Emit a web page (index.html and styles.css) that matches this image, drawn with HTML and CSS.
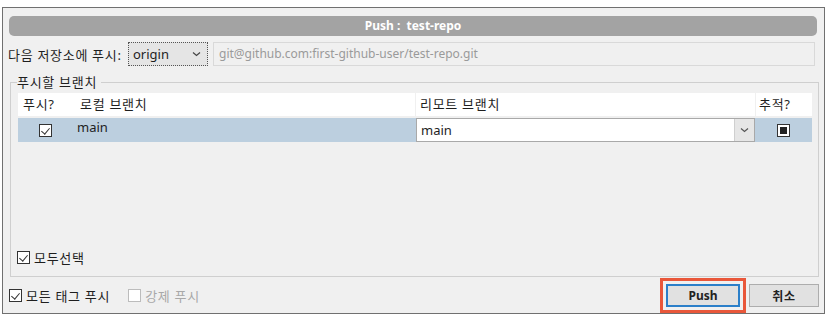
FILE: index.html
```html
<!DOCTYPE html>
<html lang="ko">
<head>
    <meta charset="UTF-8">
    <meta name="viewport" content="width=device-width, initial-scale=1.0">
    <title>Push : test-repo</title>
    <link rel="stylesheet" href="styles.css">
</head>
<body>
    <div class="window">
        <div class="titlebar">Push :&nbsp; test-repo</div>

        <div class="remote-row">
            <span class="remote-label ko">다음 저장소에 푸시:</span>
            <div class="remote-select">
                <span>origin</span>
                <svg class="chevron" width="9" height="6" viewBox="0 0 9 6"><path d="M1 1.5 L4.5 4.5 L8 1.5" fill="none" stroke="#444" stroke-width="1.2"/></svg>
            </div>
            <div class="remote-url">git@github.com:first-github-user/test-repo.git</div>
        </div>

        <fieldset class="branches">
            <legend class="ko">푸시할 브랜치</legend>
            <div class="branch-table">
                <div class="branch-head ko">
                    <div class="col-push">푸시?</div>
                    <div class="col-local">로컬 브랜치</div>
                    <div class="col-remote">리모트 브랜치</div>
                    <div class="col-track">추적?</div>
                </div>
                <div class="branch-row">
                    <div class="col-push"><span class="check checked"></span></div>
                    <div class="col-local">main</div>
                    <div class="col-remote">
                        <div class="remote-branch">
                            <span class="remote-branch-name">main</span>
                            <span class="remote-branch-btn">
                                <svg width="9" height="6" viewBox="0 0 9 6"><path d="M1 1.5 L4.5 4.5 L8 1.5" fill="none" stroke="#555" stroke-width="1.2"/></svg>
                            </span>
                        </div>
                    </div>
                    <div class="col-track"><span class="check filled"></span></div>
                </div>
            </div>
            <label class="option select-all ko"><span class="check checked"></span>모두선택</label>
        </fieldset>

        <div class="bottom-row">
            <label class="option ko"><span class="check checked"></span>모든 태그 푸시</label>
            <label class="option disabled ko"><span class="check"></span>강제 푸시</label>
            <div class="buttons">
                <span class="highlight"><button class="btn btn-default">Push</button></span>
                <button class="btn btn-cancel ko">취소</button>
            </div>
        </div>
    </div>
</body>
</html>
```

FILE: styles.css
```css
body {
    margin: 0;
    background: #fff;
    font-family: "Noto Sans", "Noto Sans CJK KR", sans-serif;
    font-size: 13px;
    color: #1e1e1e;
}

/* Hangul labels run a bit wider in the original */
.ko {
    letter-spacing: 0.7px;
}

/* Dialog frame */
.window {
    margin: 7px 0 0 2px;
    width: 823px;
    height: 307px;
    box-sizing: border-box;
    border: 1px solid #707070;
    background: #f0f0f0;
    padding: 8px 7px 0 6px;
}

.titlebar {
    height: 20px;
    line-height: 20px;
    border-radius: 5px;
    background: #a3a3a3;
    color: #fff;
    font-weight: bold;
    font-size: 12px;
    text-align: center;
}

/* Remote row */
.remote-row {
    display: flex;
    align-items: center;
    height: 24px;
    margin-top: 6px;
}

.remote-label {
    margin-left: -1px;
    width: 120px;
}

.remote-select {
    display: flex;
    align-items: center;
    justify-content: space-between;
    width: 80px;
    height: 24px;
    box-sizing: border-box;
    border: 1px dotted #555;
    background: #e5e5e5;
    padding: 0 6px 0 4px;
}

.remote-url {
    flex: 1;
    height: 24px;
    line-height: 22px;
    box-sizing: border-box;
    margin-left: 5px;
    margin-right: 2px;
    border: 1px solid #d9d9d9;
    background: #f0f0f0;
    color: #9a9a9a;
    padding-left: 5px;
    font-size: 12px;
}

/* Branch group */
.branches {
    margin: 8px 2px 0 1px;
    padding: 3px 6px 9px 7px;
    border: 1px solid #cfcfcf;
    height: 203px;
    box-sizing: border-box;
    display: flex;
    flex-direction: column;
}

.branches legend {
    padding: 0 4px 0 0;
    margin-left: -1px;
    line-height: 16px;
}

.branch-table {
    flex: 1;
}

.branch-head,
.branch-row {
    display: grid;
    grid-template-columns: 54px 343px 340px 57px;
}

.branch-head {
    height: 23px;
    line-height: 23px;
    background: #fff;
}

.branch-head .col-push { padding-left: 5px; }
.branch-head .col-local { padding-left: 8px; }
.branch-head .col-remote { padding-left: 4px; border-left: 1px solid #f0f0f0; }
.branch-head .col-track { padding-left: 3px; border-left: 1px solid #f0f0f0; }

.branch-row {
    height: 24px;
    margin-top: 2px;
    background: #bccfdf;
}

.branch-row .col-push,
.branch-row .col-track {
    display: flex;
    align-items: center;
    justify-content: center;
}

.branch-row .col-local {
    padding-left: 5px;
    line-height: 18px;
}

.remote-branch {
    display: flex;
    height: 24px;
    box-sizing: border-box;
    border: 1px solid #a9a9a9;
    background: #fff;
    margin-left: 1px;
}

.remote-branch-name {
    flex: 1;
    line-height: 22px;
    padding-left: 4px;
}

.remote-branch-btn {
    width: 19px;
    border-left: 1px solid #cfcfcf;
    background: #e6e6e6;
    display: flex;
    align-items: center;
    justify-content: center;
}

/* Checkboxes */
.check {
    display: inline-block;
    position: relative;
    width: 13px;
    height: 13px;
    box-sizing: border-box;
    border: 1px solid #333;
    background: #fff;
    flex-shrink: 0;
}

.check.checked::after {
    content: "";
    position: absolute;
    left: 3px;
    top: 1px;
    width: 4px;
    height: 7px;
    border: solid #333;
    border-width: 0 1px 1px 0;
    transform: rotate(40deg);
}

.check.filled::after {
    content: "";
    position: absolute;
    left: 2px;
    top: 2px;
    width: 7px;
    height: 7px;
    background: #222;
}

.option {
    display: flex;
    align-items: center;
    gap: 4px;
}

.option.disabled {
    color: #a8a8a8;
}

.option.disabled .check {
    border-color: #bcbcbc;
}

.select-all {
    margin-left: -1px;
}

/* Bottom row */
.bottom-row {
    display: flex;
    align-items: center;
    height: 23px;
    margin-top: 7px;
    gap: 18px;
}

.buttons {
    margin-left: auto;
    display: flex;
    gap: 9px;
    margin-right: -2px;
}

.btn {
    width: 74px;
    height: 23px;
    box-sizing: border-box;
    border: 1px solid #adadad;
    background: #e1e1e1;
    font-family: "Noto Sans", "Noto Sans CJK KR", sans-serif;
    font-size: 12px;
    font-weight: bold;
    color: #222;
    padding: 0;
}

.btn-cancel {
    width: 70px;
}

.btn-default {
    border: 2px solid #2b7fc9;
}

.highlight {
    display: inline-block;
    outline: 3px solid #e9573a;
    outline-offset: 3px;
    line-height: 0;
}
```
